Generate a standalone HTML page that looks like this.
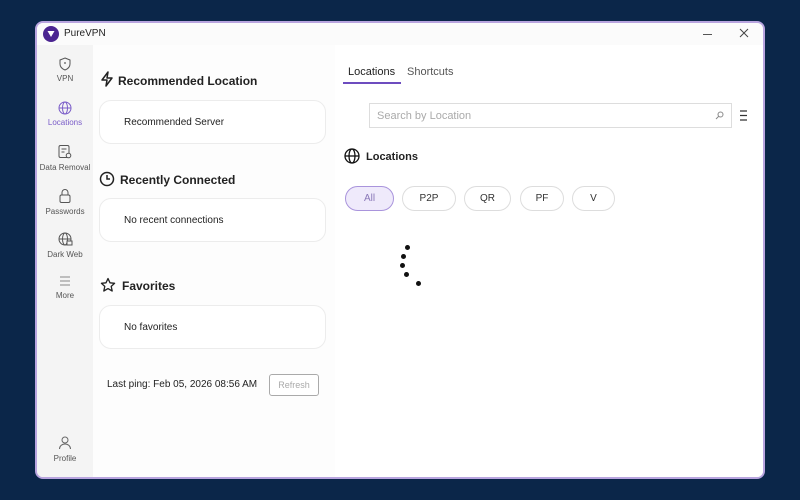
<!DOCTYPE html>
<html><head><style>
*{margin:0;padding:0;box-sizing:border-box}
body{width:800px;height:500px;background:#0b2649;font-family:"Liberation Sans",sans-serif;position:relative;overflow:hidden}
.win{position:absolute;left:35px;top:21px;width:730px;height:458px;border:2px solid #b8a4df;border-radius:8px;background:#fdfdfd;overflow:hidden}
.title{position:absolute;left:0;top:0;width:100%;height:22px;background:#fbfbfb}
.side{position:absolute;left:0;top:22px;width:56px;bottom:0;background:#f4f4f4}
.nav{position:absolute;left:0;width:56px;text-align:center;font-size:8px;color:#555}
.nav svg{display:block;margin:0 auto 3px}
.t{position:absolute;font-size:12px;color:#222}
.h{position:absolute;font-size:12px;font-weight:bold;color:#222}
.card{position:absolute;left:62px;width:227px;height:44px;background:#fff;border:1px solid #ececec;border-radius:12px;font-size:10px;color:#222;padding:16px 0 0 24px}
.right{position:absolute;left:298px;top:22px;right:0;bottom:0;background:#fff}
.pill{position:absolute;top:141px;height:25px;border:1px solid #ddd;border-radius:13px;font-size:10px;color:#333;text-align:center;line-height:23px;background:#fff}
.dot{position:absolute;width:5px;height:5px;border-radius:50%;background:#111}
</style></head><body>
<div class="win">
<div class="title">
<svg style="position:absolute;left:6px;top:3px" width="16" height="16"><circle cx="8" cy="8" r="8" fill="#4b2591"/><path d="M4.5 5 h7 l-3.5 6z" fill="#fff"/></svg>
<span style="position:absolute;left:27px;top:5px;font-size:10px;color:#222">PureVPN</span>
<div style="position:absolute;left:666px;top:11px;width:9px;height:1px;background:#555"></div>
<svg style="position:absolute;left:702px;top:5px" width="10" height="10"><path d="M1 1L9 9M9 1L1 9" stroke="#444" stroke-width="1"/></svg>
</div>
<div class="side">
<div class="nav" style="top:12px"><svg width="14" height="14" viewBox="0 0 14 14"><path d="M7 1L12 3v4c0 3-2.5 5-5 6-2.5-1-5-3-5-6V3z" fill="none" stroke="#555"/><circle cx="7" cy="6" r="0.9" fill="#555"/></svg>VPN</div>
<div class="nav" style="top:56px;color:#7a5cc8"><svg width="14" height="14" viewBox="0 0 14 14" fill="none" stroke="#7a5cc8"><circle cx="7" cy="7" r="6"/><ellipse cx="7" cy="7" rx="2.5" ry="6"/><path d="M1 7h12"/></svg>Locations</div>
<div class="nav" style="top:99px"><svg width="16" height="16" viewBox="0 0 16 16" fill="none" stroke="#555"><rect x="2" y="1.5" width="10" height="12" rx="1.5"/><path d="M4.5 5h5M4.5 8h3"/><circle cx="11.5" cy="11.5" r="2.3" fill="#f4f4f4"/></svg>Data Removal</div>
<div class="nav" style="top:143px"><svg width="14" height="16" viewBox="0 0 14 16" fill="none" stroke="#555"><path d="M4 7V4.5a3 3 0 0 1 6 0V7"/><rect x="2" y="7" width="10" height="7.5" rx="1.5"/></svg>Passwords</div>
<div class="nav" style="top:187px"><svg width="15" height="15" viewBox="0 0 15 15" fill="none" stroke="#555"><circle cx="7" cy="7" r="6"/><ellipse cx="7" cy="7" rx="2.5" ry="6"/><path d="M1 7h12"/><rect x="9" y="9" width="5" height="4" fill="#f4f4f4"/></svg>Dark Web</div>
<div class="nav" style="top:229px"><svg width="14" height="14" viewBox="0 0 14 14" stroke="#888"><path d="M2 3h10M2 7h10M2 11h10"/></svg>More</div>
<div class="nav" style="top:390px"><svg width="14" height="16" viewBox="0 0 14 16" fill="none" stroke="#666"><circle cx="7" cy="5" r="3"/><path d="M1.5 14c0-3 2.5-5 5.5-5s5.5 2 5.5 5"/></svg>Profile</div>
</div>
<svg style="position:absolute;left:62px;top:48px" width="16" height="16" viewBox="0 0 16 16" fill="none" stroke="#222" stroke-width="1.5" stroke-linejoin="round"><path d="M9 1L3 9h5l-1 6 6-8H8z"/></svg>
<div class="h" style="left:81px;top:51px">Recommended Location</div>
<div class="card" style="top:77px">Recommended Server</div>
<svg style="position:absolute;left:62px;top:148px" width="16" height="16" viewBox="0 0 16 16" fill="none" stroke="#222" stroke-width="1.5"><circle cx="8" cy="8" r="6.5"/><path d="M8 4v4h3"/></svg>
<div class="h" style="left:83px;top:150px">Recently Connected</div>
<div class="card" style="top:175px">No recent connections</div>
<svg style="position:absolute;left:63px;top:254px" width="16" height="16" viewBox="0 0 16 16" fill="none" stroke="#222" stroke-width="1.3" stroke-linejoin="round"><path d="M8 1.5l2 4.3 4.6.5-3.4 3.1 1 4.6L8 11.6l-4.2 2.4 1-4.6L1.4 6.3 6 5.8z"/></svg>
<div class="h" style="left:85px;top:256px">Favorites</div>
<div class="card" style="top:282px">No favorites</div>
<div class="t" style="left:70px;top:356px;font-size:10px">Last ping: Feb 05, 2026 08:56 AM</div>
<div style="position:absolute;left:232px;top:351px;width:50px;height:22px;border:1px solid #aaa;border-radius:3px;font-size:9px;color:#aaa;text-align:center;line-height:20px;background:#fff">Refresh</div>
<div class="right">
<div class="t" style="left:13px;top:21px;font-size:11px">Locations</div>
<div class="t" style="left:72px;top:21px;font-size:11px;color:#555">Shortcuts</div>
<div style="position:absolute;left:8px;top:37px;width:58px;height:2px;background:#6d4cbf"></div>
<div style="position:absolute;left:34px;top:58px;width:363px;height:25px;border:1px solid #ddd;font-size:11px;color:#aaa;padding:6px 0 0 7px">Search by Location</div>
<svg style="position:absolute;left:380px;top:66px" width="9" height="9" viewBox="0 0 9 9" fill="none" stroke="#888"><circle cx="5.5" cy="3.5" r="2.5"/><path d="M4 5L1 8"/></svg>
<svg style="position:absolute;left:405px;top:65px" width="8" height="11" stroke="#333" stroke-width="1.2"><path d="M0 1h7M0 5.5h7M0 10h7"/></svg>
<svg style="position:absolute;left:9px;top:103px" width="16" height="16" viewBox="0 0 16 16" fill="none" stroke="#111" stroke-width="1.3"><circle cx="8" cy="8" r="7"/><ellipse cx="8" cy="8" rx="3" ry="7"/><path d="M1 8h14"/></svg>
<div class="h" style="left:31px;top:106px;font-size:11px">Locations</div>
<div class="pill" style="left:10px;width:49px;background:#efeafb;border-color:#a994dc;color:#8a78b8">All</div>
<div class="pill" style="left:67px;width:54px">P2P</div>
<div class="pill" style="left:129px;width:47px">QR</div>
<div class="pill" style="left:185px;width:44px">PF</div>
<div class="pill" style="left:237px;width:43px">V</div>
<div class="dot" style="left:70px;top:200px"></div>
<div class="dot" style="left:66px;top:209px"></div>
<div class="dot" style="left:65px;top:218px"></div>
<div class="dot" style="left:69px;top:227px"></div>
<div class="dot" style="left:81px;top:236px"></div>
</div>
</div>
</body></html>
